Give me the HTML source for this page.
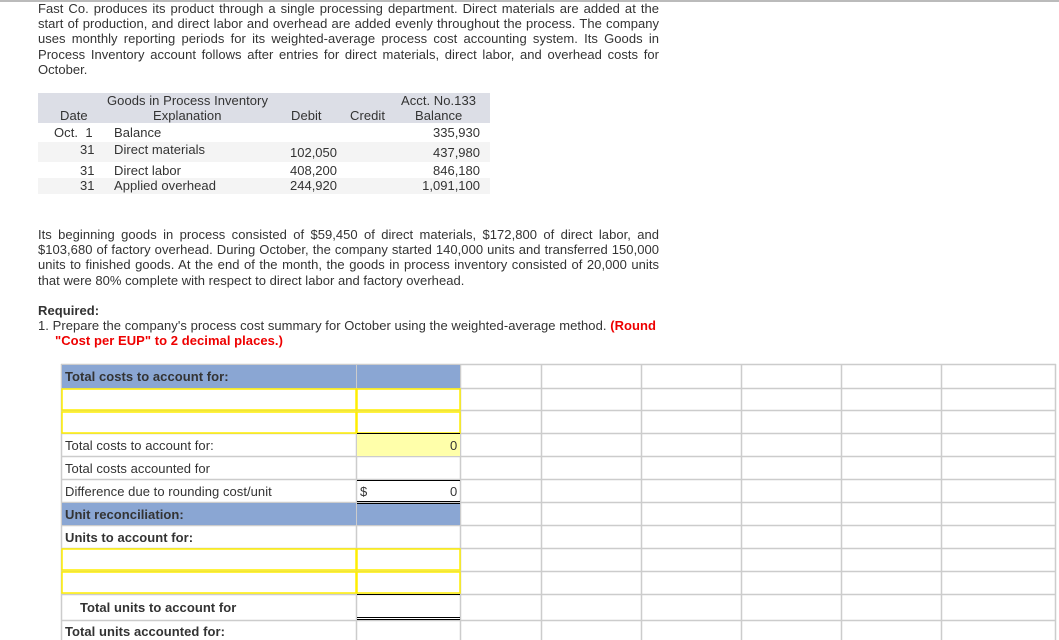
<!DOCTYPE html>
<html><head><style>
body{margin:0;width:1059px;height:640px;overflow:hidden;background:#fff;font-family:"Liberation Sans",Arial,sans-serif;color:#333;position:relative}
.p{position:absolute;left:38px;width:621px;font-size:13px;letter-spacing:0.03px;line-height:15.2px;text-align:justify}
.t{position:absolute;font-size:13px;letter-spacing:0.05px;white-space:nowrap}
.r{position:absolute;font-size:13px;white-space:nowrap;text-align:right}
.c{position:absolute;box-sizing:border-box}
</style></head><body>
<div style="position:absolute;left:0;top:0;width:1059px;height:2px;background:#bbb"></div>
<div class="p" style="top:1px">Fast Co. produces its product through a single processing department. Direct materials are added at the start of production, and direct labor and overhead are added evenly throughout the process. The company uses monthly reporting periods for its weighted-average process cost accounting system. Its Goods in Process Inventory account follows after entries for direct materials, direct labor, and overhead costs for October.</div>

<div class="c" style="left:38px;top:93px;width:452px;height:30px;background:#dcdee6"></div>
<div class="c" style="left:38px;top:142px;width:452px;height:20px;background:#f4f4f4"></div>
<div class="c" style="left:38px;top:178px;width:452px;height:16px;background:#f4f4f4"></div>
<div class="t" style="left:107px;top:93px">Goods in Process Inventory</div>
<div class="t" style="left:153px;top:108px">Explanation</div>
<div class="t" style="left:60px;top:108px">Date</div>
<div class="t" style="left:291px;top:108px">Debit</div>
<div class="t" style="left:350px;top:108px">Credit</div>
<div class="t" style="left:401px;top:93px">Acct. No.133</div>
<div class="t" style="left:415px;top:108px">Balance</div>
<div class="t" style="left:54px;top:125px">Oct.&nbsp; 1</div>
<div class="t" style="left:114px;top:125px">Balance</div>
<div class="r" style="right:579px;top:125px">335,930</div>
<div class="t" style="left:80px;top:142px">31</div>
<div class="t" style="left:114px;top:142px">Direct materials</div>
<div class="r" style="right:722px;top:145px">102,050</div>
<div class="r" style="right:579px;top:145px">437,980</div>
<div class="t" style="left:80px;top:163px">31</div>
<div class="t" style="left:114px;top:163px">Direct labor</div>
<div class="r" style="right:722px;top:163px">408,200</div>
<div class="r" style="right:579px;top:163px">846,180</div>
<div class="t" style="left:80px;top:178px">31</div>
<div class="t" style="left:114px;top:178px">Applied overhead</div>
<div class="r" style="right:722px;top:178px">244,920</div>
<div class="r" style="right:579px;top:178px">1,091,100</div>

<div class="p" style="top:227px">Its beginning goods in process consisted of $59,450 of direct materials, $172,800 of direct labor, and $103,680 of factory overhead. During October, the company started 140,000 units and transferred 150,000 units to finished goods. At the end of the month, the goods in process inventory consisted of 20,000 units that were 80% complete with respect to direct labor and factory overhead.</div>

<div class="t" style="left:38px;top:303px;font-weight:bold">Required:</div>
<div class="t" style="left:38px;top:318px">1. Prepare the company's process cost summary for October using the weighted-average method. <b style="color:#e00">(Round</b></div>
<div class="t" style="left:55px;top:333px;color:#e00;font-weight:bold">"Cost per EUP" to 2 decimal places.)</div>

<svg style="position:absolute;left:0;top:0" width="1059" height="640">
<g stroke="#ccc" stroke-width="1.5" fill="none">
<path d="M61 364.5H1056M61 388.5H1056M61 410.5H1056M61 433.5H1056M61 456.5H1056M61 479.5H1056M61 502.5H1056M61 525.5H1056M61 548.5H1056M61 571.5H1056M61 594.5H1056M61 620.5H1056"/>
<path d="M61.5 364V640M356.5 364V640M460.5 364V640M541.5 364V640M641.5 364V640M741.5 364V640M841.5 364V640M941.5 364V640M1055.5 364V640"/>
</g>
<rect x="62" y="365" width="294" height="23" fill="#8aa6d3"/><rect x="357" y="365" width="103" height="23" fill="#8aa6d3"/>
<rect x="62" y="503" width="294" height="22" fill="#8aa6d3"/><rect x="357" y="503" width="103" height="22" fill="#8aa6d3"/>
<rect x="357" y="434" width="103" height="22" fill="#ffffaa"/>
<g fill="none" stroke="#ffee00" stroke-width="1.5">
<rect x="62" y="389" width="294" height="21"/><rect x="357" y="389" width="103" height="21"/>
<rect x="62" y="412" width="294" height="21"/><rect x="357" y="412" width="103" height="21"/>
<rect x="62" y="549" width="294" height="21"/><rect x="357" y="549" width="103" height="21"/>
<rect x="62" y="572" width="294" height="21"/><rect x="357" y="572" width="103" height="21"/>
</g>
<g stroke="#000" stroke-width="1">
<path d="M357 433.5H460M357 480.5H460M357 501.5H460M357 503.5H460M357 594.5H460M357 617.5H460M357 619.5H460"/>
</g>
</svg>
<div class="t" style="left:65px;top:369px;font-weight:bold">Total costs to account for:</div>
<div class="t" style="left:65px;top:438px">Total costs to account for:</div>
<div class="t" style="left:450px;top:438px">0</div>
<div class="t" style="left:65px;top:461px">Total costs accounted for</div>
<div class="t" style="left:65px;top:484px">Difference due to rounding cost/unit</div>
<div class="t" style="left:360px;top:484px">$</div>
<div class="t" style="left:450px;top:484px">0</div>
<div class="t" style="left:65px;top:507px;font-weight:bold">Unit reconciliation:</div>
<div class="t" style="left:65px;top:530px;font-weight:bold">Units to account for:</div>
<div class="t" style="left:80px;top:600px;font-weight:bold">Total units to account for</div>
<div class="t" style="left:65px;top:624px;font-weight:bold">Total units accounted for:</div>
</body></html>
